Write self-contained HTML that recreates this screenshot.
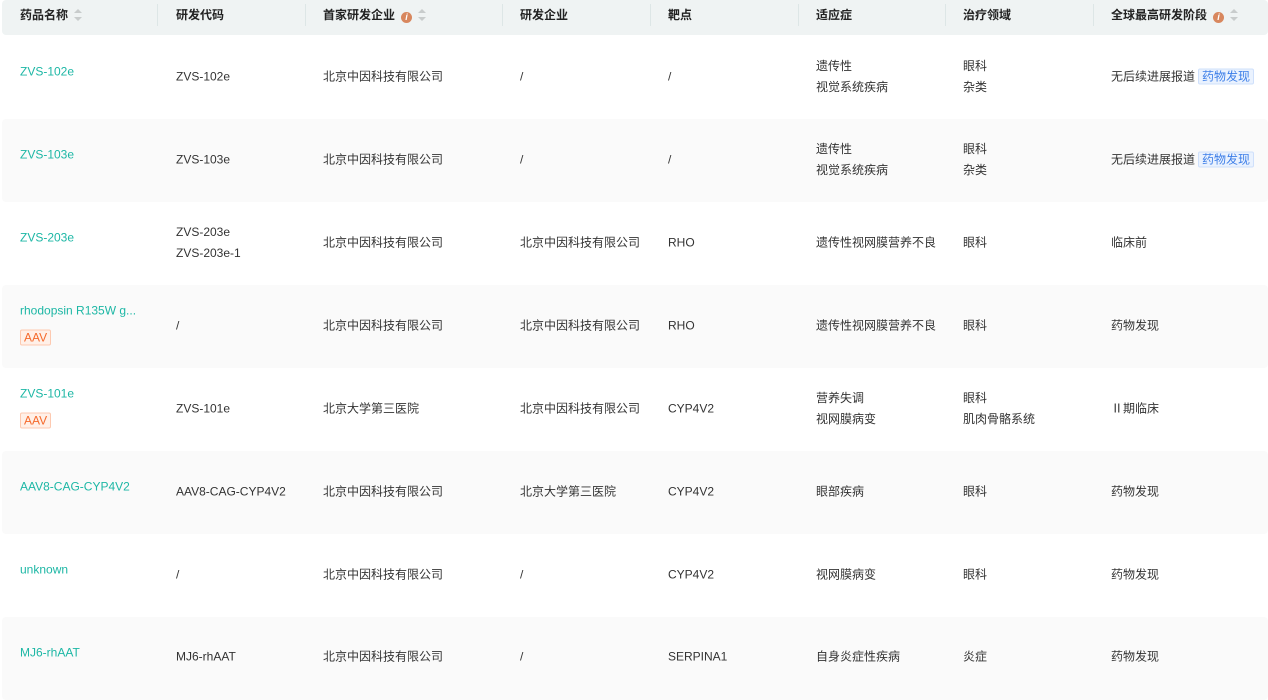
<!DOCTYPE html>
<html><head><meta charset="utf-8"><style>
*{margin:0;padding:0;box-sizing:border-box}
body{width:1268px;height:693px;overflow:hidden;background:#fff;font-family:"Liberation Sans","Noto Sans CJK SC",sans-serif;font-size:12px;color:#333;position:relative}
.hd{position:absolute;left:2px;top:0;width:1266px;height:35px;background:#eff3f3;border-radius:4px}
.hd div{position:absolute;top:0;height:35px;line-height:30px;font-weight:bold;color:#222;font-size:12px}
.dv{position:absolute;top:4px;width:1px;height:22px;background:#dde6e6}
.row{position:absolute;left:2px;width:1266px;height:83px}
.g{background:#fafafa;border-radius:4px}
.c{position:absolute;line-height:21px;transform:translateY(-50%);white-space:nowrap}
.nm{color:#1db7a5}
.tag{display:inline-block;border:1px solid #fdc9b0;background:#fff0e8;color:#f5692b;font-size:12px;line-height:14px;padding:0 3px;border-radius:2px}
.bt{display:inline-block;border:1px solid #cfe0fb;background:#eaf2fe;color:#3c7ee8;line-height:14px;padding:0 3px;border-radius:2px;margin-left:3px}
.info{display:inline-block;width:11px;height:11px;border-radius:50%;background:#d8875e;color:#fff;font-size:9px;line-height:11px;text-align:center;font-style:italic;vertical-align:-1px;margin-left:6px}
.sort{display:inline-block;width:8px;height:12px;vertical-align:-2px;margin-left:6px;position:relative}
.sort:before,.sort:after{content:"";position:absolute;left:0;border-left:4px solid transparent;border-right:4px solid transparent}
.sort:before{top:0;border-bottom:4px solid #c8cccc}
.sort:after{bottom:0;border-top:4px solid #c8cccc}
</style></head><body>
<div class="hd">
<div style="left:18px">药品名称<span class="sort"></span></div>
<div style="left:174px">研发代码</div>
<div style="left:321px">首家研发企业<span class="info">i</span><span class="sort"></span></div>
<div style="left:518px">研发企业</div>
<div style="left:666px">靶点</div>
<div style="left:814px">适应症</div>
<div style="left:961px">治疗领域</div>
<div style="left:1109px">全球最高研发阶段<span class="info">i</span><span class="sort"></span></div>
<span class="dv" style="left:155px"></span><span class="dv" style="left:303px"></span><span class="dv" style="left:500px"></span><span class="dv" style="left:648px"></span><span class="dv" style="left:796px"></span><span class="dv" style="left:943px"></span><span class="dv" style="left:1091px"></span>
</div>

<div class="row" style="top:36px"></div>
<div class="row g" style="top:119px"></div>
<div class="row" style="top:202px"></div>
<div class="row g" style="top:285px"></div>
<div class="row" style="top:368px"></div>
<div class="row g" style="top:451px"></div>
<div class="row" style="top:534px"></div>
<div class="row g" style="top:617px"></div>

<!-- r1 -->
<div class="c nm" style="left:20px;top:72px">ZVS-102e</div>
<div class="c" style="left:176px;top:77px">ZVS-102e</div>
<div class="c" style="left:323px;top:77px">北京中因科技有限公司</div>
<div class="c" style="left:520px;top:77px">/</div>
<div class="c" style="left:668px;top:77px">/</div>
<div class="c" style="left:816px;top:77px">遗传性<br>视觉系统疾病</div>
<div class="c" style="left:963px;top:77px">眼科<br>杂类</div>
<div class="c" style="left:1111px;top:77px">无后续进展报道<span class="bt">药物发现</span></div>
<!-- r2 -->
<div class="c nm" style="left:20px;top:155px">ZVS-103e</div>
<div class="c" style="left:176px;top:160px">ZVS-103e</div>
<div class="c" style="left:323px;top:160px">北京中因科技有限公司</div>
<div class="c" style="left:520px;top:160px">/</div>
<div class="c" style="left:668px;top:160px">/</div>
<div class="c" style="left:816px;top:160px">遗传性<br>视觉系统疾病</div>
<div class="c" style="left:963px;top:160px">眼科<br>杂类</div>
<div class="c" style="left:1111px;top:160px">无后续进展报道<span class="bt">药物发现</span></div>
<!-- r3 -->
<div class="c nm" style="left:20px;top:238px">ZVS-203e</div>
<div class="c" style="left:176px;top:243px">ZVS-203e<br>ZVS-203e-1</div>
<div class="c" style="left:323px;top:243px">北京中因科技有限公司</div>
<div class="c" style="left:520px;top:243px">北京中因科技有限公司</div>
<div class="c" style="left:668px;top:243px">RHO</div>
<div class="c" style="left:816px;top:243px">遗传性视网膜营养不良</div>
<div class="c" style="left:963px;top:243px">眼科</div>
<div class="c" style="left:1111px;top:243px">临床前</div>
<!-- r4 -->
<div class="c nm" style="left:20px;top:311px">rhodopsin R135W g...</div>
<div class="c" style="left:20px;top:338px"><span class="tag">AAV</span></div>
<div class="c" style="left:176px;top:326px">/</div>
<div class="c" style="left:323px;top:326px">北京中因科技有限公司</div>
<div class="c" style="left:520px;top:326px">北京中因科技有限公司</div>
<div class="c" style="left:668px;top:326px">RHO</div>
<div class="c" style="left:816px;top:326px">遗传性视网膜营养不良</div>
<div class="c" style="left:963px;top:326px">眼科</div>
<div class="c" style="left:1111px;top:326px">药物发现</div>
<!-- r5 -->
<div class="c nm" style="left:20px;top:394px">ZVS-101e</div>
<div class="c" style="left:20px;top:421px"><span class="tag">AAV</span></div>
<div class="c" style="left:176px;top:409px">ZVS-101e</div>
<div class="c" style="left:323px;top:409px">北京大学第三医院</div>
<div class="c" style="left:520px;top:409px">北京中因科技有限公司</div>
<div class="c" style="left:668px;top:409px">CYP4V2</div>
<div class="c" style="left:816px;top:409px">营养失调<br>视网膜病变</div>
<div class="c" style="left:963px;top:409px">眼科<br>肌肉骨骼系统</div>
<div class="c" style="left:1111px;top:409px">Ⅱ期临床</div>
<!-- r6 -->
<div class="c nm" style="left:20px;top:487px">AAV8-CAG-CYP4V2</div>
<div class="c" style="left:176px;top:492px">AAV8-CAG-CYP4V2</div>
<div class="c" style="left:323px;top:492px">北京中因科技有限公司</div>
<div class="c" style="left:520px;top:492px">北京大学第三医院</div>
<div class="c" style="left:668px;top:492px">CYP4V2</div>
<div class="c" style="left:816px;top:492px">眼部疾病</div>
<div class="c" style="left:963px;top:492px">眼科</div>
<div class="c" style="left:1111px;top:492px">药物发现</div>
<!-- r7 -->
<div class="c nm" style="left:20px;top:570px">unknown</div>
<div class="c" style="left:176px;top:575px">/</div>
<div class="c" style="left:323px;top:575px">北京中因科技有限公司</div>
<div class="c" style="left:520px;top:575px">/</div>
<div class="c" style="left:668px;top:575px">CYP4V2</div>
<div class="c" style="left:816px;top:575px">视网膜病变</div>
<div class="c" style="left:963px;top:575px">眼科</div>
<div class="c" style="left:1111px;top:575px">药物发现</div>
<!-- r8 -->
<div class="c nm" style="left:20px;top:653px">MJ6-rhAAT</div>
<div class="c" style="left:176px;top:657px">MJ6-rhAAT</div>
<div class="c" style="left:323px;top:657px">北京中因科技有限公司</div>
<div class="c" style="left:520px;top:657px">/</div>
<div class="c" style="left:668px;top:657px">SERPINA1</div>
<div class="c" style="left:816px;top:657px">自身炎症性疾病</div>
<div class="c" style="left:963px;top:657px">炎症</div>
<div class="c" style="left:1111px;top:657px">药物发现</div>
</body></html>
